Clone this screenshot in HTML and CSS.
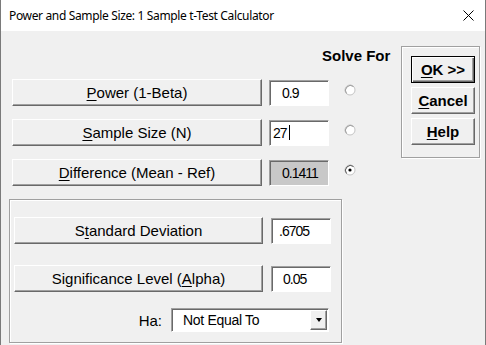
FILE: index.html
```html
<!DOCTYPE html>
<html lang="en">
<head>
  <meta charset="UTF-8">
  <title>Power and Sample Size: 1 Sample t-Test Calculator</title>
  <link rel="stylesheet" href="styles.css">
</head>
<body>
  <div class="window">
    <!-- barra del titolo -->
    <div class="titlebar">
      <span class="title">Power and Sample Size: 1 Sample t-Test Calculator</span>
      <svg class="close" width="11" height="11" viewBox="0 0 11 11">
        <path d="M0.5 0.5L10.5 10.5M10.5 0.5L0.5 10.5" stroke="#000" stroke-width="1" fill="none"/>
      </svg>
    </div>

    <div class="client">
      <div class="main">
        <div class="solve-head">Solve For</div>

        <div class="row">
          <button class="btn wide"><u>P</u>ower (1-Beta)</button>
          <div class="field pad-11">0.9</div>
          <svg class="radio" width="12" height="12" viewBox="0 0 12 12">
            <circle cx="6" cy="6" r="5" fill="#fff" stroke="#c4c4c4"/>
            <path d="M2.5 9.5A5 5 0 0 1 9.5 2.5" stroke="#9a9a9a" fill="none"/>
          </svg>
        </div>

        <div class="row">
          <button class="btn wide"><u>S</u>ample Size (N)</button>
          <div class="field pad-2">27<span class="caret"></span></div>
          <svg class="radio" width="12" height="12" viewBox="0 0 12 12">
            <circle cx="6" cy="6" r="5" fill="#fff" stroke="#c4c4c4"/>
            <path d="M2.5 9.5A5 5 0 0 1 9.5 2.5" stroke="#9a9a9a" fill="none"/>
          </svg>
        </div>

        <div class="row">
          <button class="btn wide"><u>D</u>ifference (Mean - Ref)</button>
          <div class="field pad-11 solved">0.1411</div>
          <svg class="radio" width="12" height="12" viewBox="0 0 12 12">
            <circle cx="6" cy="6" r="5" fill="#fff" stroke="#c4c4c4"/>
            <path d="M2.5 9.5A5 5 0 0 1 9.5 2.5" stroke="#555" fill="none"/>
            <circle cx="6" cy="6" r="1.6" fill="#000"/>
          </svg>
        </div>

        <!-- parametri fissi -->
        <div class="group lower">
          <div class="row">
            <button class="btn mid">S<u>t</u>andard Deviation</button>
            <div class="field narrow pad-6">.6705</div>
          </div>
          <div class="row sig">
            <button class="btn mid">Significance Level (<u>A</u>lpha)</button>
            <div class="field narrow pad-10">0.05</div>
          </div>
          <div class="ha-row">
            <span class="ha-label">Ha:</span>
            <div class="combo">
              <span class="combo-text">Not Equal To</span>
              <span class="combo-btn"><span class="arrow"></span></span>
            </div>
          </div>
        </div>
      </div>

      <div class="group actions">
        <button class="btn act default"><u>O</u>K &gt;&gt;</button>
        <button class="btn act"><u>C</u>ancel</button>
        <button class="btn act"><u>H</u>elp</button>
      </div>
    </div>
  </div>
</body>
</html>
```

FILE: styles.css
```css
body {
  margin: 0;
  font-family: "Liberation Sans", Arial, sans-serif;
  background-color: #f0f0f0;
}
.window {
  width: 486px;
  height: 345px;
  box-sizing: border-box;
  border-left: 1px solid #7a7a7a;
  border-right: 1px solid #7a7a7a;
  background-color: #f0f0f0;
  overflow: hidden;
}
.titlebar {
  height: 31px;
  background-color: #fff;
  display: flex;
  align-items: center;
  justify-content: space-between;
  padding: 0 11px 0 8px;
}
.title {
  font-family: "Noto Sans", sans-serif;
  font-size: 12px;
  letter-spacing: -0.35px;
  color: #000;
}
.client {
  display: flex;
  height: 314px;
}
.main {
  width: 400px;
}
.solve-head {
  padding: 16px 0 0 321px;
  font-size: 15px;
  font-weight: bold;
  line-height: 17px;
}
.row {
  display: flex;
  align-items: center;
  height: 27px;
  margin: 15px 0 0 11px;
}
.row + .row {
  margin-top: 13px;
}
.btn {
  box-sizing: border-box;
  height: 27px;
  padding: 0;
  font-family: "Liberation Sans", Arial, sans-serif;
  font-size: 15px;
  color: #000;
  background-color: #f0f0f0;
  border: 1px solid;
  border-color: #fff #696969 #696969 #fff;
  box-shadow: inset -1px -1px #a0a0a0;
}
.btn u {
  text-decoration-thickness: 1px;
  text-underline-offset: 2px;
}
.wide {
  width: 250px;
}
.field {
  box-sizing: border-box;
  width: 60px;
  height: 26px;
  margin-left: 7px;
  display: flex;
  align-items: center;
  background-color: #fff;
  border: 1px solid;
  border-color: #a0a0a0 #fff #fff #a0a0a0;
  box-shadow: inset 1px 1px #696969;
  font-size: 14px;
  letter-spacing: -1px;
}
.field.solved {
  background-color: #c8c8c8;
}
.pad-2 { padding-left: 3px; }
.pad-6 { padding-left: 7px; }
.pad-10 { padding-left: 11px; }
.pad-11 { padding-left: 12px; }
.caret {
  display: inline-block;
  width: 1px;
  height: 15px;
  margin-left: 2px;
  background-color: #000;
}
.radio {
  align-self: flex-start;
  margin: 5px 0 0 15px;
}
.group {
  box-sizing: border-box;
  border: 1px solid #a0a0a0;
  box-shadow: inset 1px 1px #fff, 1px 1px #fff;
}
.lower {
  width: 333px;
  height: 144px;
  margin: 13px 0 0 8px;
  padding: 17px 0 0 4px;
}
.lower .row {
  margin: 0;
}
.lower .row.sig {
  margin-top: 21px;
}
.mid {
  width: 249px;
}
.field.narrow {
  margin-left: 8px;
}
.ha-row {
  display: flex;
  align-items: center;
  margin-top: 16px;
  margin-left: -4px;
}
.ha-label {
  width: 152px;
  text-align: right;
  font-size: 15px;
}
.combo {
  box-sizing: border-box;
  width: 158px;
  height: 24px;
  margin-left: 9px;
  display: flex;
  align-items: center;
  justify-content: space-between;
  background-color: #fff;
  border: 1px solid;
  border-color: #a0a0a0 #fff #fff #a0a0a0;
  box-shadow: inset 1px 1px #696969;
}
.combo-text {
  padding-left: 11px;
  font-size: 14px;
  letter-spacing: -0.3px;
}
.combo-btn {
  box-sizing: border-box;
  width: 17px;
  height: 20px;
  margin-right: 1px;
  display: flex;
  align-items: center;
  justify-content: center;
  background-color: #f0f0f0;
  border: 1px solid;
  border-color: #fff #696969 #696969 #fff;
  box-shadow: inset -1px -1px #a0a0a0;
}
.arrow {
  width: 0;
  height: 0;
  border-left: 3.5px solid transparent;
  border-right: 3.5px solid transparent;
  border-top: 4px solid #000;
}
.actions {
  width: 79px;
  height: 112px;
  margin-top: 15px;
  padding: 9px 0 0 9px;
  display: flex;
  flex-direction: column;
  gap: 4px;
}
.act {
  width: 64px;
  font-weight: bold;
}
.act.default {
  border: 1px solid #000;
  box-shadow: inset 1px 1px #fff, inset -1px -1px #696969, inset -2px -2px #a0a0a0;
}
```
